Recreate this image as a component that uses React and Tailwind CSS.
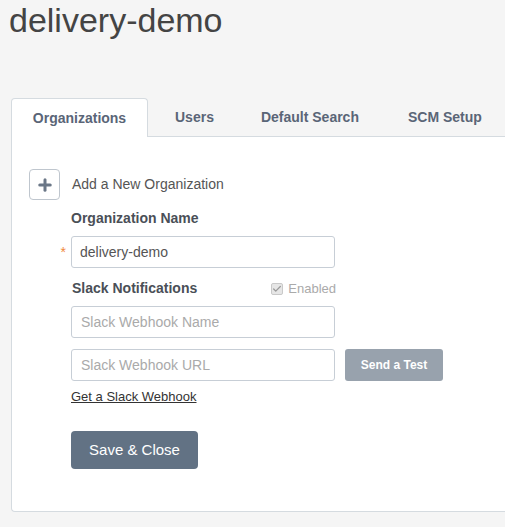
import { Plus, Check } from 'lucide-react'

const TABS = ['Organizations', 'Users', 'Default Search', 'SCM Setup']

export default function App() {
  return (
    <div className="min-h-[527px] bg-[#f5f5f5] font-['Liberation_Sans',Arial,sans-serif] text-[#555]">
      <h1 className="pl-[9px] pt-0 text-[34px] leading-[40px] text-[#444]">delivery-demo</h1>

      {/* tabs */}
      <div className="mt-[58px] ml-[11px] flex items-end">
        <div className="w-[137px] h-[39px] rounded-t-[4px] border border-b-0 border-[#d5dbe0] bg-white flex items-center justify-center text-[14px] font-bold text-[#5a6577]">
          Organizations
        </div>
        <div className="flex-1 flex h-[38px] items-center border-b border-[#d5dbe0] text-[14px] font-bold text-[#5a6577]">
          <span className="ml-[27px]">{TABS[1]}</span>
          <span className="ml-[47px]">{TABS[2]}</span>
          <span className="ml-[49px]">{TABS[3]}</span>
        </div>
      </div>

      {/* panel */}
      <div className="ml-[11px] h-[375px] border border-t-0 border-r-0 border-[#d5dbe0] rounded-bl-[4px] bg-white pt-[32px]">
        <div className="flex items-center pl-[17px]">
          <div className="w-[31px] h-[31px] rounded-[4px] border border-[#bfc6ce] flex items-center justify-center text-[#6b7787]">
            <Plus size={18} strokeWidth={4} />
          </div>
          <span className="ml-[12px] text-[14px] text-[#555]">Add a New Organization</span>
        </div>

        <div className="pl-[59px] mt-[8px] text-[14px] font-bold text-[#4a4f57]">Organization Name</div>

        <div className="mt-[7px] flex items-center">
          <span className="w-[59px] text-right pr-[5px] text-[14px] text-[#f08a3c]">*</span>
          <div className="w-[264px] h-[32px] rounded-[3px] border border-[#c7ced6] flex items-center pl-[8px] text-[14px] text-[#555]">
            delivery-demo
          </div>
        </div>

        <div className="pl-[60px] mt-[10px] flex items-center w-[324px] justify-between">
          <span className="text-[14px] font-bold text-[#4a4f57]">Slack Notifications</span>
          <span className="flex items-center text-[13px] text-[#aaa]">
            <span className="w-[12px] h-[12px] rounded-[2px] border border-[#c9c9c9] bg-[#e6e6e6] flex items-center justify-center text-[#999] mr-[5px]">
              <Check size={10} strokeWidth={3} />
            </span>
            Enabled
          </span>
        </div>

        <div className="pl-[59px] mt-[7px]">
          <div className="w-[264px] h-[32px] rounded-[3px] border border-[#c7ced6] flex items-center pl-[9px] text-[14px] text-[#aaa]">
            Slack Webhook Name
          </div>
        </div>

        <div className="pl-[59px] mt-[11px] flex items-center">
          <div className="w-[264px] h-[32px] rounded-[3px] border border-[#c7ced6] flex items-center pl-[9px] text-[14px] text-[#aaa]">
            Slack Webhook URL
          </div>
          <div className="ml-[10px] w-[98px] h-[32px] rounded-[3px] bg-[#98a2ad] flex items-center justify-center text-[12px] font-bold text-white">
            Send a Test
          </div>
        </div>

        <div className="pl-[59px] mt-[8px] text-[13px] text-[#333] underline leading-[16px]">Get a Slack Webhook</div>

        <div className="pl-[59px] mt-[26px]">
          <div className="w-[127px] h-[38px] rounded-[4px] bg-[#627284] flex items-center justify-center text-[15px] text-white">
            Save &amp; Close
          </div>
        </div>
      </div>
    </div>
  )
}
